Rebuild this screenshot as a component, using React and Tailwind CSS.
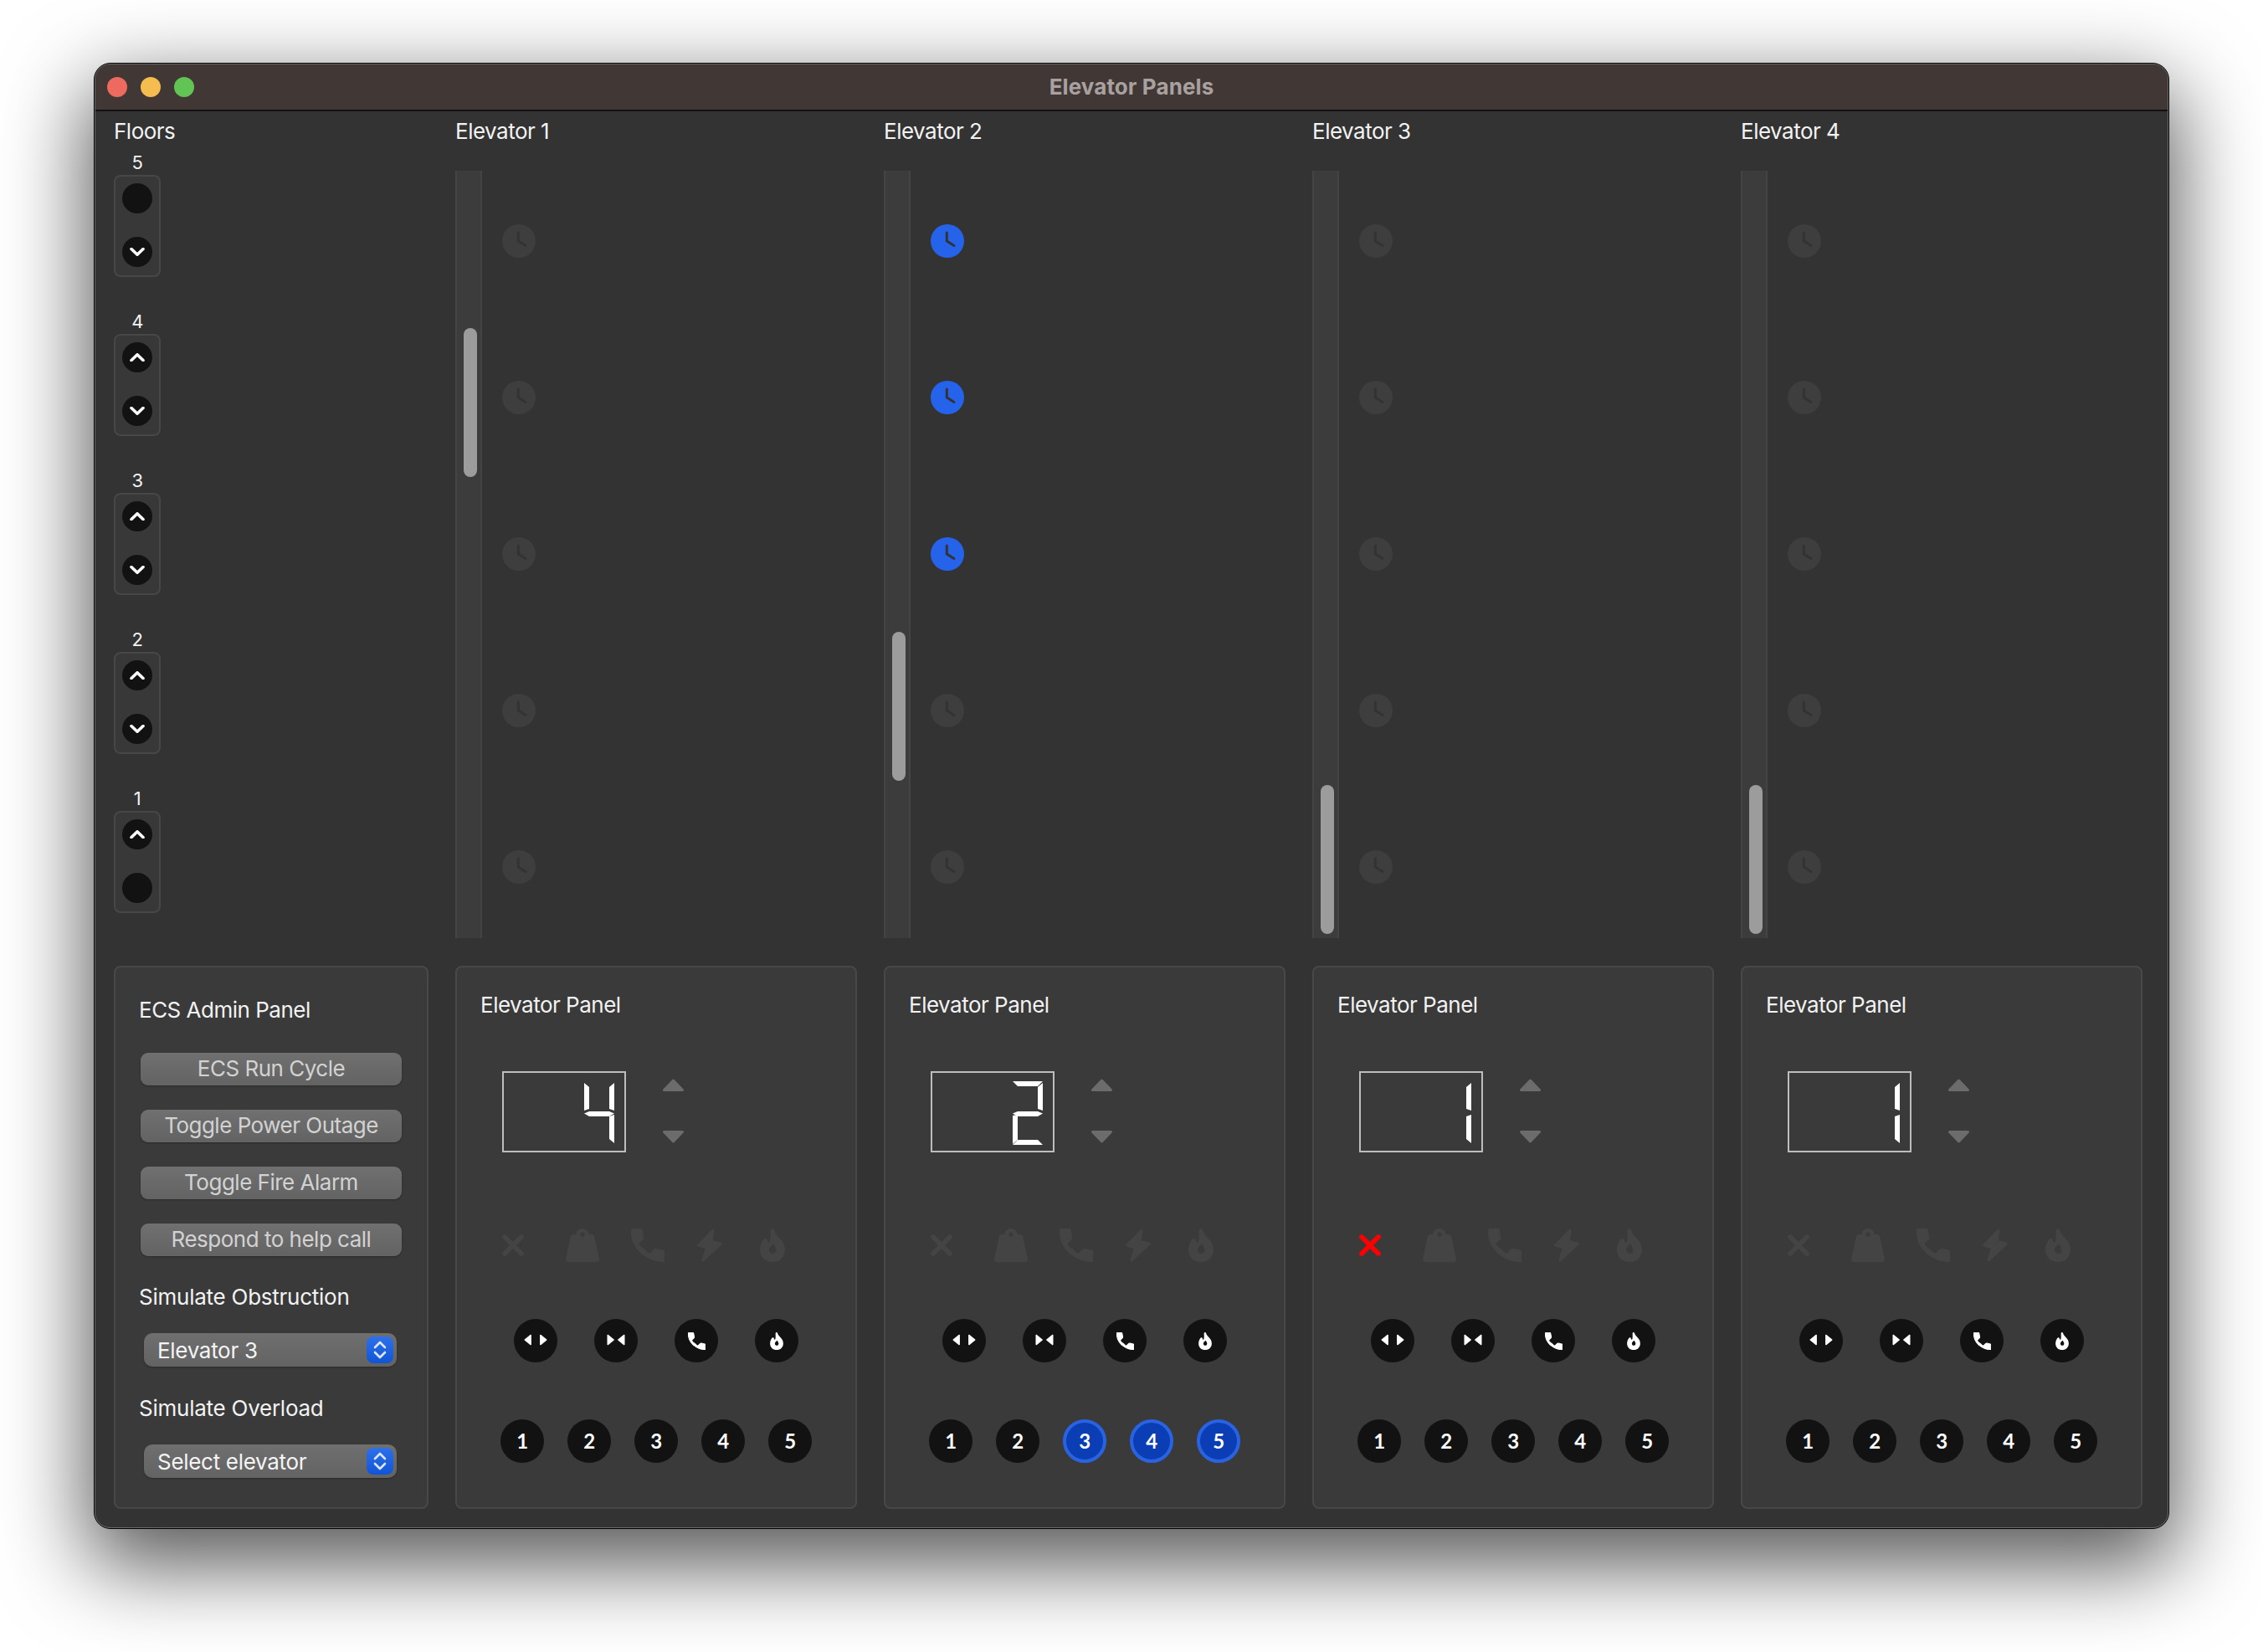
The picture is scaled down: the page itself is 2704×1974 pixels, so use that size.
import React from "react";

const SEG = {
  a: "0,0 36,0 30,6 6,6",
  b: "36,2 36,35 30,33 30,7",
  c: "36,40 30,42 30,69 36,74",
  d: "0,76 6,70 30,70 36,76",
  e: "0,41 6,40 6,70 0,75",
  f: "0,2 6,7 6,33 0,35",
  g: "0,38.5 6,36 30,36 36,38.5 30,42 6,42",
};
const DIGITS = { 1: ["b", "c"], 2: ["a", "b", "g", "e", "d"], 4: ["f", "b", "g", "c"] };

function Digit({ value }) {
  return (
    <svg width="36" height="76" viewBox="0 0 36 76" className="block">
      {DIGITS[value].map((s) => (
        <polygon key={s} points={SEG[s]} fill="#ffffff" />
      ))}
    </svg>
  );
}

function Clock({ active }) {
  return (
    <svg width="40" height="40" viewBox="0 0 40 40" className="block">
      <circle cx="20" cy="20" r="20" fill={active ? "#2563eb" : "#3e3e3e"} />
      <path d="M19.3 10V20L28 25.5" fill="none" stroke="#333333" strokeWidth="3" strokeLinecap="round" strokeLinejoin="round" />
    </svg>
  );
}

function Chevron({ dir }) {
  return (
    <svg width="18" height="10" viewBox="0 0 18 10" className="block">
      <path
        d={dir === "up" ? "M2 8.5L9 1.8L16 8.5" : "M2 1.5L9 8.2L16 1.5"}
        fill="none"
        stroke="#ffffff"
        strokeWidth="3.6"
        strokeLinecap="round"
        strokeLinejoin="round"
      />
    </svg>
  );
}

function XMark({ color, size = 26 }) {
  return (
    <svg width={size} height={size} viewBox="0 0 26 26" className="block">
      <path d="M3 3L23 23M23 3L3 23" fill="none" stroke={color} strokeWidth="5.6" strokeLinecap="round" />
    </svg>
  );
}

function Weight({ color }) {
  return (
    <svg width="40" height="40" viewBox="0 0 40 40" className="block">
      <path
        fillRule="evenodd"
        fill={color}
        d="M20 0C24.5 0 27.5 3 27.6 7H31C32.6 7 33.8 8 34.2 9.6L39.9 36C40.3 38.2 39 40 36.8 40H3.2C1 40 -0.3 38.2 0.1 36L5.8 9.6C6.2 8 7.4 7 9 7H12.4C12.5 3 15.5 0 20 0ZM20 4.6C18.5 4.6 17.4 5.7 17.4 7.2C17.4 8.7 18.5 9.8 20 9.8C21.5 9.8 22.6 8.7 22.6 7.2C22.6 5.7 21.5 4.6 20 4.6Z"
      />
    </svg>
  );
}

function Phone({ color, size = 40 }) {
  return (
    <svg width={size} height={size} viewBox="120 -840 720 720" className="block">
      <path
        fill={color}
        stroke={color}
        strokeWidth="36"
        strokeLinejoin="round"
        d="M798-138q-125 0-243-52T329-329Q229-429 178-551T138-798q0-18 8-25t16-7h152q14 0 25 9.5t13 22.5l26 140q2 16-1 27t-11 19l-97 98q20 37 47.5 71.5T387-386q31 31 65 57.5t72 48.5l94-94q9-9 23.5-13.5T670-390l138 28q14 4 16 14.5t6 23.5v162q0 18-8 24t-24 0Z"
      />
    </svg>
  );
}

function Bolt({ color }) {
  return (
    <svg width="32" height="40" viewBox="0 0 32 40" className="block">
      <path
        fill={color}
        stroke={color}
        strokeWidth="3"
        strokeLinejoin="round"
        d="M20 2L2.5 20L12.5 23L8 38L29.5 18L18 15.5Z"
      />
    </svg>
  );
}

function Flame({ color, width = 30, height = 40 }) {
  return (
    <svg width={width} height={height} viewBox="0 0 30 40" className="block">
      <path
        fillRule="evenodd"
        fill={color}
        d="M12.5 2.5C12.5 0 16 -0.8 17 2C18 5.4 20 8 24 12C28 16 30 20.5 30 25.5C30 34 23.5 40 15 40C6.5 40 0 34 0 25.5C0 20.5 2 15.5 4.6 12.8C6.4 11 9 12 9 14.6C9.2 16.4 10.4 17.3 11.4 16.4C13 14.8 12.5 8 12.5 2.5ZM15.8 18.5C13.4 20.8 11 23 11 25.6C11 28.2 13 30.2 15.3 30.2C17.8 30.2 19.6 28 19.4 25.4C19.2 22.8 17.6 20.4 15.8 18.5Z"
      />
    </svg>
  );
}

function Doors({ open }) {
  return (
    <svg width="28" height="14" viewBox="0 0 28 14" className="block -mt-[2px]">
      {open ? (
        <>
          <path d="M8.2 1.4V12.6L1.2 7Z" fill="#fff" stroke="#fff" strokeWidth="1.4" strokeLinejoin="round" />
          <path d="M19.8 1.4V12.6L26.8 7Z" fill="#fff" stroke="#fff" strokeWidth="1.4" strokeLinejoin="round" />
        </>
      ) : (
        <>
          <path d="M4.2 1.4V12.6L11.2 7Z" fill="#fff" stroke="#fff" strokeWidth="1.4" strokeLinejoin="round" />
          <path d="M23.8 1.4V12.6L16.8 7Z" fill="#fff" stroke="#fff" strokeWidth="1.4" strokeLinejoin="round" />
        </>
      )}
    </svg>
  );
}

function RoundButton({ children }) {
  return <div className="flex h-[52px] w-[52px] items-center justify-center rounded-full bg-[#121212]">{children}</div>;
}

function FloorBlock({ floor }) {
  return (
    <div className="flex w-[56px] flex-col items-center">
      <div className="flex h-[30px] items-center text-[22px] leading-none text-[#f2f2f2]">{floor}</div>
      <div className="flex h-[122px] w-[56px] flex-col items-center gap-[28px] rounded-[8px] border-2 border-[#474747] bg-[#383838] pt-[8px]">
        <div className="flex h-[36px] w-[36px] items-center justify-center rounded-full bg-[#121212]">
          {floor !== 5 && <Chevron dir="up" />}
        </div>
        <div className="flex h-[36px] w-[36px] items-center justify-center rounded-full bg-[#121212]">
          {floor !== 1 && <Chevron dir="down" />}
        </div>
      </div>
    </div>
  );
}

function Shaft({ name, thumbTop, lit }) {
  return (
    <div className="flex w-[480px] flex-col">
      <div className="h-[32px] text-[26px] leading-[32px] text-[#f2f2f2]">{name}</div>
      <div className="mt-[31px] flex h-[917px]">
        <div className="relative h-full w-[32px] border-x-2 border-[#444444] bg-[#3c3c3c]">
          <div className="absolute left-[8px] h-[178px] w-[16px] rounded-full bg-[#9c9c9c]" style={{ top: thumbTop }} />
        </div>
        <div className="ml-[24px] flex flex-col gap-[147px] pt-[64px]">
          {[5, 4, 3, 2, 1].map((f) => (
            <Clock key={f} active={lit.includes(f)} />
          ))}
        </div>
      </div>
    </div>
  );
}

function ElevatorPanel({ digit, obstructed, active }) {
  const dim = "#444444";
  return (
    <div className="h-[649px] w-[480px] rounded-[8px] border-2 border-[#484848] bg-[#3a3a3a] pl-[28px] pt-[29px]">
      <div className="h-[32px] text-[26px] leading-[32px] text-[#f2f2f2]">Elevator Panel</div>
      <div className="ml-[26px] mt-[63px] flex h-[97px]">
        <div className="flex h-[97px] w-[148px] justify-end border-2 border-[#bdbdbd] pr-[12px] pt-[10px]">
          <Digit value={digit} />
        </div>
        <div className="ml-[44px] flex flex-col gap-[45px] pt-[9px]">
          <svg width="25" height="16" viewBox="0 0 25 16" className="block">
            <path d="M12.5 2L23.5 13.5H1.5Z" fill="#6c6c6c" stroke="#6c6c6c" strokeWidth="3" strokeLinejoin="round" />
          </svg>
          <svg width="25" height="16" viewBox="0 0 25 16" className="block">
            <path d="M12.5 14L23.5 2.5H1.5Z" fill="#6c6c6c" stroke="#6c6c6c" strokeWidth="3" strokeLinejoin="round" />
          </svg>
        </div>
      </div>
      <div className="ml-[26px] mt-[91px] flex h-[40px] items-center">
        <XMark color={obstructed ? "#ff0000" : dim} />
        <div className="ml-[50px]">
          <Weight color={dim} />
        </div>
        <div className="ml-[38px]">
          <Phone color={dim} />
        </div>
        <div className="ml-[38px]">
          <Bolt color={dim} />
        </div>
        <div className="ml-[44px]">
          <Flame color={dim} />
        </div>
      </div>
      <div className="ml-[40px] mt-[68px] flex gap-[44px]">
        <RoundButton>
          <Doors open />
        </RoundButton>
        <RoundButton>
          <Doors />
        </RoundButton>
        <RoundButton>
          <Phone color="#ffffff" size={21} />
        </RoundButton>
        <RoundButton>
          <Flame color="#ffffff" width={16} height={21} />
        </RoundButton>
      </div>
      <div className="ml-[24px] mt-[68px] flex gap-[28px]">
        {[1, 2, 3, 4, 5].map((n) => (
          <div
            key={n}
            className={
              active.includes(n)
                ? "flex h-[52px] w-[52px] items-center justify-center rounded-full border-[4px] border-[#2a63e2] bg-[#0b3db4] text-[24px] font-bold text-white [font-family:Lato,sans-serif]"
                : "flex h-[52px] w-[52px] items-center justify-center rounded-full bg-[#121212] text-[24px] font-bold text-white [font-family:Lato,sans-serif]"
            }
          >
            {n}
          </div>
        ))}
      </div>
    </div>
  );
}

function AdminButton({ children }) {
  return (
    <div className="flex h-[39px] w-[312px] items-center justify-center rounded-[9px] bg-gradient-to-b from-[#707070] to-[#636363] pb-[2px] text-[26px] leading-none text-[#d2d2d2] shadow-[0_1px_2px_rgba(0,0,0,0.3)]">
      {children}
    </div>
  );
}

function AdminSelect({ children }) {
  return (
    <div className="ml-[6px] mt-[27px] flex h-[40px] w-[302px] items-center justify-between rounded-[10px] bg-gradient-to-b from-[#6f6f6f] to-[#636363] pl-[16px] pr-[4px] text-[26px] leading-none tracking-[-0.3px] text-[#f4f4f4] shadow-[0_1px_2px_rgba(0,0,0,0.3)]">
      <span className="pt-[2px]">{children}</span>
      <div className="flex h-[32px] w-[32px] items-center justify-center rounded-[8px] bg-gradient-to-b from-[#2d70e8] to-[#0f55d6]">
        <svg width="16" height="24" viewBox="0 0 16 24" className="block">
          <path d="M2 9L8 3L14 9M2 15L8 21L14 15" fill="none" stroke="#dce6fb" strokeWidth="2.6" strokeLinecap="round" strokeLinejoin="round" />
        </svg>
      </div>
    </div>
  );
}

export default function App() {
  return (
    <div className="h-[1974px] w-[2704px] overflow-hidden bg-white pl-[112px] pt-[75px] tracking-[-0.5px] [font-family:Inter,sans-serif]">
      <div className="h-[1752px] w-[2480px] rounded-[20px] border border-black bg-[#333333] shadow-[0_36px_100px_8px_rgba(0,0,0,0.66)]">
        <div className="flex h-full flex-col overflow-hidden rounded-[19px] border border-[#6a6a6a]">
          <div className="grid h-[56px] shrink-0 grid-cols-[1fr_auto_1fr] items-center border-b-2 border-[#111111] bg-[#413836] px-[14px]">
            <div className="flex gap-[16px]">
              <div className="h-[24px] w-[24px] rounded-full bg-[#ee6a5f]" />
              <div className="h-[24px] w-[24px] rounded-full bg-[#f5bd4f]" />
              <div className="h-[24px] w-[24px] rounded-full bg-[#61c454]" />
            </div>
            <div className="text-[26px] font-bold leading-none tracking-[0.1px] text-[#a9a1a0]">Elevator Panels</div>
            <div />
          </div>
          <div className="flex flex-col pl-[22px] pt-[8px]">
            <div className="flex h-[981px] gap-[32px]">
              <div className="w-[376px]">
                <div className="h-[32px] text-[26px] leading-[32px] text-[#f2f2f2]">Floors</div>
                <div className="mt-[6px] flex flex-col gap-[38px]">
                  {[5, 4, 3, 2, 1].map((f) => (
                    <FloorBlock key={f} floor={f} />
                  ))}
                </div>
              </div>
              <Shaft name="Elevator 1" thumbTop={188} lit={[]} />
              <Shaft name="Elevator 2" thumbTop={551} lit={[5, 4, 3]} />
              <Shaft name="Elevator 3" thumbTop={734} lit={[]} />
              <Shaft name="Elevator 4" thumbTop={734} lit={[]} />
            </div>
            <div className="mt-[32px] flex gap-[32px]">
              <div className="h-[649px] w-[376px] rounded-[8px] border-2 border-[#484848] bg-[#3a3a3a] pl-[28px] pt-[35px] text-[26px] leading-[32px] text-[#f2f2f2]">
                <div className="h-[32px]">ECS Admin Panel</div>
                <div className="ml-[2px] mt-[35px] flex flex-col gap-[29px]">
                  <AdminButton>ECS Run Cycle</AdminButton>
                  <AdminButton>Toggle Power Outage</AdminButton>
                  <AdminButton>Toggle Fire Alarm</AdminButton>
                  <AdminButton>Respond to help call</AdminButton>
                </div>
                <div className="mt-[33px] h-[32px] tracking-[-0.25px]">Simulate Obstruction</div>
                <AdminSelect>Elevator 3</AdminSelect>
                <div className="mt-[34px] h-[32px] tracking-[-0.25px]">Simulate Overload</div>
                <AdminSelect>Select elevator</AdminSelect>
              </div>
              <ElevatorPanel digit={4} active={[]} />
              <ElevatorPanel digit={2} active={[3, 4, 5]} />
              <ElevatorPanel digit={1} obstructed active={[]} />
              <ElevatorPanel digit={1} active={[]} />
            </div>
          </div>
        </div>
      </div>
    </div>
  );
}
